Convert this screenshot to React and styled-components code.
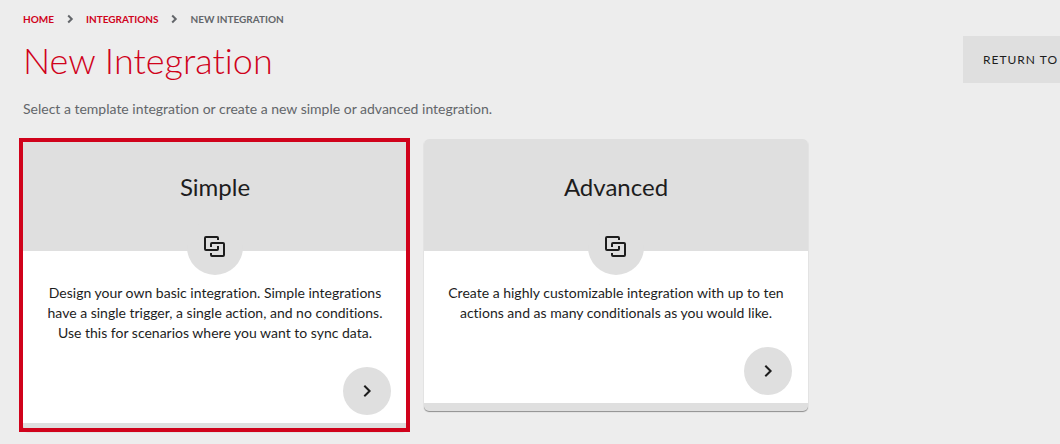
import React from "react";
import styled, { createGlobalStyle } from "styled-components";

const GlobalStyle = createGlobalStyle`
  *, *::before, *::after { box-sizing: border-box; }
  body {
    margin: 0;
    background: #ededed;
    color: #1d1d1d;
    font-family: Lato, "Liberation Sans", sans-serif;
    font-size: 14px;
    line-height: 20px;
    font-variant-ligatures: none;
    overflow: hidden;
  }
`;

const Page = styled.main`
  padding: 11px 0 12px 23px;
`;

const Crumbs = styled.nav`
  display: flex;
  align-items: center;
  gap: 8px;
  height: 16px;
  font-size: 10px;
  line-height: 16px;
  font-weight: 700;
  text-transform: uppercase;
  color: #63666a;
`;

const CrumbLink = styled.a`
  color: #d0021b;
  text-decoration: none;
`;

const Header = styled.header`
  display: flex;
  align-items: flex-start;
  justify-content: space-between;
  margin-top: 9px;
`;

const Title = styled.h1`
  margin: 0;
  padding-top: 2px;
  font-size: 36px;
  line-height: 44px;
  font-weight: 300;
  color: #d0021b;
`;

const ReturnButton = styled.button`
  flex: none;
  height: 47px;
  margin-right: -18px;
  padding: 0 20px;
  border: 0;
  background: #dfdfdf;
  color: #1d1d1d;
  font: inherit;
  font-size: 12px;
  letter-spacing: 1px;
  text-transform: uppercase;
  white-space: nowrap;
`;

const Intro = styled.p`
  margin: 16px 0 20px;
  color: #63666a;
`;

const Cards = styled.div`
  display: flex;
  flex-wrap: wrap;
  align-items: flex-start;
  gap: 17px;
`;

const Card = styled.article`
  position: relative;
  flex: 0 1 384px;
  border-bottom: 8px solid #dfdfdf;
  border-radius: 5px;
  background: #fff;
  box-shadow: 0 1px 1px rgba(0, 0, 0, 0.4);

  &::after {
    content: "";
    display: ${(p) => (p.$selected ? "block" : "none")};
    position: absolute;
    inset: -1px -3px -9px -4px;
    border: 4px solid #d0021b;
  }
`;

const CardHeader = styled.div`
  display: flex;
  flex-direction: column;
  align-items: center;
  height: 112px;
  padding-top: 32px;
  border-radius: 5px 5px 0 0;
  background: #dfdfdf;
`;

const CardTitle = styled.h2`
  margin: 0;
  font-size: 24px;
  line-height: 32px;
  font-weight: 400;
`;

const Badge = styled.span`
  display: flex;
  flex: none;
  align-items: center;
  justify-content: center;
  width: 56px;
  height: 56px;
  margin-top: 16px;
  border-radius: 50%;
  background: #dfdfdf;
`;

const CardBody = styled.div`
  display: flex;
  flex-direction: column;
  padding: 32px 16px 8px;
`;

const Description = styled.p`
  margin: 0 0 24px;
  text-align: center;
`;

const NextButton = styled.button`
  display: flex;
  align-items: center;
  justify-content: center;
  align-self: flex-end;
  width: 48px;
  height: 48px;
  padding: 0;
  border: 0;
  border-radius: 50%;
  background: #dfdfdf;
  color: #1d1d1d;
`;

const Chevron = ({ size, width }) => (
  <svg width={size} height={size} viewBox="0 0 24 24" fill="none" stroke="currentColor" strokeWidth={width} aria-hidden="true">
    <path d="M9.3 6.7 14.6 12 9.3 17.3" />
  </svg>
);

const LinkedSquares = () => (
  <svg width="22" height="22" viewBox="0 0 22 22" fill="none" stroke="#1d1d1d" strokeWidth="2" aria-hidden="true">
    <path d="M14 4V2a1 1 0 0 0-1-1H2a1 1 0 0 0-1 1v11a1 1 0 0 0 1 1h11a1 1 0 0 0 1-1v-3" />
    <path d="M7 17v2a1 1 0 0 0 1 1h11a1 1 0 0 0 1-1V8a1 1 0 0 0-1-1H8a1 1 0 0 0-1 1v3" />
  </svg>
);

const templates = [
  {
    name: "Simple",
    text: "Design your own basic integration. Simple integrations have a single trigger, a single action, and no conditions. Use this for scenarios where you want to sync data.",
    selected: true,
  },
  {
    name: "Advanced",
    text: "Create a highly customizable integration with up to ten actions and as many conditionals as you would like.",
    selected: false,
  },
];

export default function App() {
  return (
    <>
      <GlobalStyle />
      <Page>
        <Crumbs aria-label="Breadcrumb">
          <CrumbLink href="#home">Home</CrumbLink>
          <Chevron size={16} width={3} />
          <CrumbLink href="#integrations">Integrations</CrumbLink>
          <Chevron size={16} width={3} />
          <span>New Integration</span>
        </Crumbs>
        <Header>
          <Title>New Integration</Title>
          <ReturnButton type="button">Return to</ReturnButton>
        </Header>
        <Intro>Select a template integration or create a new simple or advanced integration.</Intro>
        <Cards>
          {templates.map((t) => (
            <Card key={t.name} $selected={t.selected}>
              <CardHeader>
                <CardTitle>{t.name}</CardTitle>
                <Badge><LinkedSquares /></Badge>
              </CardHeader>
              <CardBody>
                <Description>{t.text}</Description>
                <NextButton type="button" aria-label={`Create ${t.name} integration`}>
                  <Chevron size={24} width={2} />
                </NextButton>
              </CardBody>
            </Card>
          ))}
        </Cards>
      </Page>
    </>
  );
}
